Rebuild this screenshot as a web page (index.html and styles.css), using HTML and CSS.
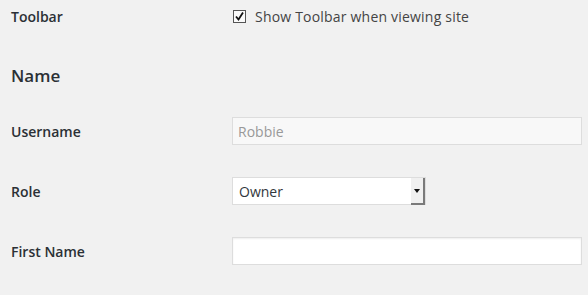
FILE: index.html
```html
<!DOCTYPE html>
<html>
<head>
<meta charset="UTF-8">
<title>Profile</title>
<link rel="stylesheet" href="styles.css">
</head>
<body>

<div class="profile">
  <div class="row row-top">
    <div class="label">Toolbar</div>
    <label class="check">
      <svg class="box" width="13" height="13" viewBox="0 0 13 13">
        <rect x="0.5" y="0.5" width="12" height="12" fill="#fafafa" stroke="#555"/>
        <path d="M3 6.5 L5.5 9.5 L10 2.5" fill="none" stroke="#111" stroke-width="1.8"/>
      </svg>
      Show Toolbar when viewing site
    </label>
  </div>

  <h2>Name</h2>

  <div class="row">
    <div class="label">Username</div>
    <input class="field readonly" type="text" value="Robbie" readonly>
  </div>

  <div class="row">
    <div class="label">Role</div>
    <div class="select">
      <span>Owner</span>
      <span class="arrow"></span>
    </div>
  </div>

  <div class="row">
    <div class="label">First Name</div>
    <input class="field" type="text">
  </div>
</div>

</body>
</html>
```

FILE: styles.css
```css
body{margin:0;background:#f1f1f1;font-family:"Open Sans",sans-serif;font-size:14px;color:#23282d}
.profile{padding-left:11px}
.row{display:flex;align-items:center;height:60px}
.row-top{height:33px}
.label{width:221px;font-weight:600;flex:none;color:#2b3035}
.check{display:flex;align-items:center;gap:9px;color:#444;padding-left:1px;letter-spacing:.2px}
.box{display:block}
h2{margin:31px 0 14px;font-size:17px;line-height:23px;font-weight:600;color:#2b3035}
.field{box-sizing:border-box;width:350px;height:28px;margin:0;padding:3px 5px;
 border:1px solid #ddd;box-shadow:inset 0 1px 2px rgba(0,0,0,.07);background:#fff;
 font-family:"Open Sans",sans-serif;font-size:14px;color:#32373c;outline:none}
.readonly{background:#f8f8f8;color:#999;box-shadow:none}
.select{position:relative;box-sizing:border-box;width:194px;height:28px;background:#fff;
 border:1px solid #ddd;padding:0 6px;display:flex;align-items:center;color:#32373c}
.arrow{position:absolute;right:0;top:0;width:12px;height:25px;background:#f0f0f0;
 border-right:2px solid #7a7a7a;border-bottom:2px solid #7a7a7a}
.arrow:after{content:"";position:absolute;left:3px;top:11px;border-left:3px solid transparent;
 border-right:3px solid transparent;border-top:4px solid #111}
```
